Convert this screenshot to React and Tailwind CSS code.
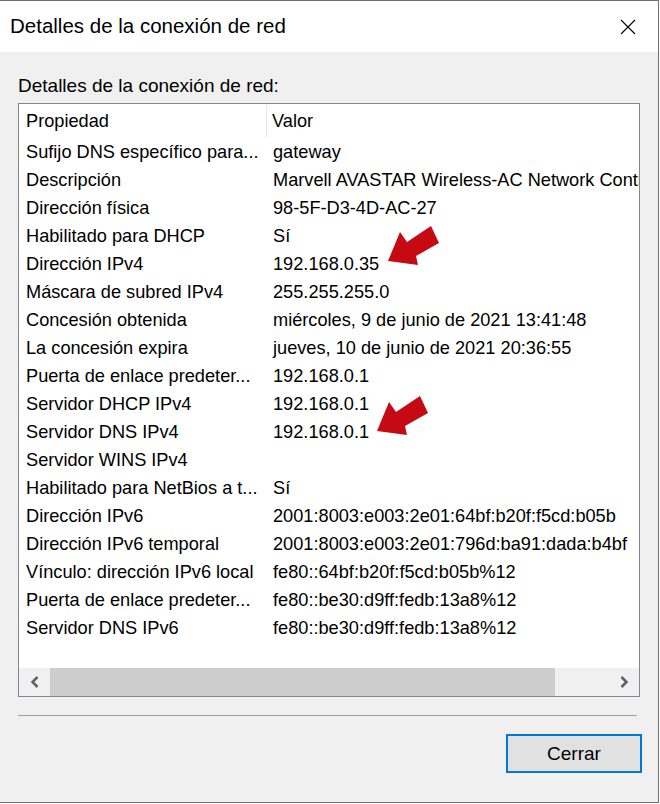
import React from 'react'

const ROWS = [
  ['Sufijo DNS específico para...', 'gateway'],
  ['Descripción', 'Marvell AVASTAR Wireless-AC Network Controller'],
  ['Dirección física', '98-5F-D3-4D-AC-27'],
  ['Habilitado para DHCP', 'Sí'],
  ['Dirección IPv4', '192.168.0.35'],
  ['Máscara de subred IPv4', '255.255.255.0'],
  ['Concesión obtenida', 'miércoles, 9 de junio de 2021 13:41:48'],
  ['La concesión expira', 'jueves, 10 de junio de 2021 20:36:55'],
  ['Puerta de enlace predeter...', '192.168.0.1'],
  ['Servidor DHCP IPv4', '192.168.0.1'],
  ['Servidor DNS IPv4', '192.168.0.1'],
  ['Servidor WINS IPv4', ''],
  ['Habilitado para NetBios a t...', 'Sí'],
  ['Dirección IPv6', '2001:8003:e003:2e01:64bf:b20f:f5cd:b05b'],
  ['Dirección IPv6 temporal', '2001:8003:e003:2e01:796d:ba91:dada:b4bf'],
  ['Vínculo: dirección IPv6 local', 'fe80::64bf:b20f:f5cd:b05b%12'],
  ['Puerta de enlace predeter...', 'fe80::be30:d9ff:fedb:13a8%12'],
  ['Servidor DNS IPv6', 'fe80::be30:d9ff:fedb:13a8%12'],
]

function RedArrow({ className }) {
  // flecha roja apuntando abajo-izquierda
  return (
    <svg className={className} width="54" height="42" viewBox="0 0 54 42">
      <polygon points="0,35 12,6 19,16 43,0 51,17 28,30 30,39" fill="#c50a13" />
    </svg>
  )
}

export default function App() {
  return (
    <div
      className="relative w-[660px] h-[804px] bg-white text-black"
      style={{ fontFamily: '"Liberation Sans", Arial, sans-serif' }}
    >
      <div className="w-[659px] h-[803px] flex flex-col border-t border-r border-b border-[#707070]">
        {/* ── Title bar ── */}
        <div className="h-[51px] shrink-0 bg-white flex items-center justify-between pl-[10px] pr-[22px]">
          <span className="text-[20.5px] leading-none">Detalles de la conexión de red</span>
          <svg width="16" height="16" viewBox="0 0 16 16">
            <path d="M1 1 L15 15 M15 1 L1 15" stroke="#000" strokeWidth="1.1" />
          </svg>
        </div>

        {/* ── Body ── */}
        <div className="flex-1 bg-[#f0f0f0] flex flex-col px-[18px]">
          <div className="text-[19px] leading-none mt-[24px] mb-[8px]">Detalles de la conexión de red:</div>

          <div className="h-[594px] w-[622px] border border-[#828790] bg-white flex flex-col overflow-hidden">
            {/* header */}
            <div className="h-[34px] shrink-0 flex items-center text-[18.2px] whitespace-nowrap">
              <div className="w-[248px] shrink-0 pl-[7px] pt-[2px] h-[32px] flex items-center border-r border-[#e5e5e5]">Propiedad</div>
              <div className="pl-[5px] pt-[2px]">Valor</div>
            </div>
            {ROWS.map(([k, v], i) => (
              <div key={i} className="h-[28px] shrink-0 flex items-center pt-[2px] text-[18.2px] whitespace-nowrap overflow-hidden">
                <div className="w-[248px] shrink-0 pl-[7px] overflow-hidden">{k}</div>
                <div className="shrink-0 pl-[6px]">{v}</div>
              </div>
            ))}
            <div className="flex-1" />
            {/* horizontal scrollbar */}
            <div className="h-[28px] shrink-0 flex bg-[#f0f0f0]">
              <div className="w-[31px] flex items-center justify-center">
                <svg width="10" height="12" viewBox="0 0 10 12">
                  <path d="M7.5 1 L2.5 6 L7.5 11" stroke="#606060" strokeWidth="2.5" fill="none" />
                </svg>
              </div>
              <div className="w-[505px] bg-[#cdcdcd]" />
              <div className="flex-1" />
              <div className="w-[31px] flex items-center justify-center">
                <svg width="10" height="12" viewBox="0 0 10 12">
                  <path d="M2.5 1 L7.5 6 L2.5 11" stroke="#606060" strokeWidth="2.5" fill="none" />
                </svg>
              </div>
            </div>
          </div>

          <div className="mt-[18px] h-px w-[619px] bg-[#a0a0a0]" />

          <div className="flex justify-end mt-[18px] -mr-[2px]">
            <button className="w-[136px] h-[39px] bg-[#e1e1e1] border-2 border-[#0078d7] text-[19px] leading-none">
              Cerrar
            </button>
          </div>
        </div>
      </div>

      <RedArrow className="absolute left-[388px] top-[226px]" />
      <RedArrow className="absolute left-[377px] top-[396px]" />
    </div>
  )
}
